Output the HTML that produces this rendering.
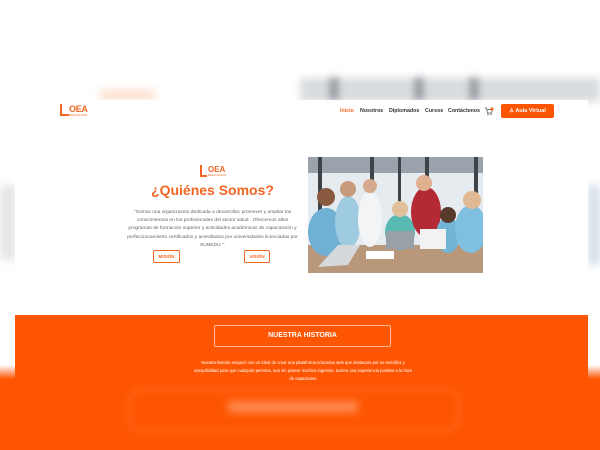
<!DOCTYPE html>
<html><head><meta charset="utf-8"><style>
*{margin:0;padding:0;box-sizing:border-box}
body{width:600px;height:450px;overflow:hidden;background:#fff;position:relative;font-family:"Liberation Sans",sans-serif}
.abs{position:absolute}
.blur{filter:blur(4px)}
nav span{position:absolute;top:108px;font-size:5.3px;font-weight:bold;color:#333}
</style></head><body>
<div class="abs blur" style="left:300px;top:78px;width:300px;height:24px;background:#d9dcdf"></div>
<div class="abs blur" style="left:330px;top:78px;width:8px;height:22px;background:#8c9095"></div>
<div class="abs blur" style="left:415px;top:78px;width:8px;height:22px;background:#8c9095"></div>
<div class="abs blur" style="left:470px;top:78px;width:8px;height:22px;background:#8c9095"></div>
<div class="abs blur" style="left:100px;top:90px;width:55px;height:10px;background:#fde0d0"></div>
<div class="abs blur" style="left:0;top:185px;width:16px;height:75px;background:#e4e6e8"></div>
<div class="abs blur" style="left:588px;top:185px;width:12px;height:80px;background:#d5dfe8"></div>
<div class="abs" style="left:0;top:375px;width:600px;height:75px;background:#fe5502"></div>
<div class="abs" style="left:0;top:365px;width:600px;height:14px;background:linear-gradient(#fff,#fe5502)"></div>
<div class="abs" style="left:128px;top:388px;width:332px;height:44px;border:3px solid rgba(255,255,255,.1);border-radius:12px;filter:blur(3px)"></div>
<div class="abs" style="left:228px;top:401px;width:130px;height:12px;background:rgba(255,255,255,.3);filter:blur(4px)"></div>
<div class="abs" style="left:45px;top:100px;width:543px;height:80px;background:#fff"></div>
<div class="abs" style="left:15px;top:130px;width:573px;height:186px;background:#fff"></div>
<div class="abs" style="left:15px;top:315px;width:573px;height:70px;background:#fe5502"></div>
<div class="abs" style="left:60px;top:104px;width:9px;height:12px;border:2px solid #f26522;border-right:none;border-top:none"></div>
<div class="abs" style="left:69px;top:104px;font-size:9px;font-weight:bold;color:#f26522;letter-spacing:-.3px">OEA</div>
<div class="abs" style="left:69px;top:113px;font-size:3px;color:#f26522">EDUCACIÓN</div>
<nav>
<span style="left:340px;color:#f26522">Inicio</span>
<span style="left:360px">Nosotros</span>
<span style="left:389px">Diplomados</span>
<span style="left:425px">Cursos</span>
<span style="left:448px">Contáctenos</span>
</nav>
<svg class="abs" style="left:484px;top:107px" width="10" height="9" viewBox="0 0 10 9"><path d="M1 1h1.5l1 5h4l1-3.5H3" fill="none" stroke="#555" stroke-width=".7"/><circle cx="4" cy="7.5" r=".7" fill="#555"/><circle cx="7" cy="7.5" r=".7" fill="#555"/><circle cx="8" cy="2" r="1.6" fill="#f26522"/></svg>
<div class="abs" style="left:501px;top:104px;width:53px;height:14px;background:#fe5502;border-radius:2px;color:#fff;font-size:5.5px;font-weight:bold;text-align:center;line-height:14px">♙ Aula Virtual</div>
<div class="abs" style="left:200px;top:165px;width:7px;height:12px;border:2px solid #f26522;border-right:none;border-top:none"></div>
<div class="abs" style="left:208px;top:165px;font-size:8px;font-weight:bold;color:#f26522">OEA</div>
<div class="abs" style="left:208px;top:173px;font-size:3px;color:#f26522">EDUCACIÓN</div>
<div class="abs" style="left:120px;top:182px;width:185px;text-align:center;font-size:14px;font-weight:bold;color:#f26522">¿Quiénes Somos?</div>
<div class="abs" style="left:125px;top:209px;width:175px;text-align:center;font-size:4.9px;line-height:8.2px;color:#666">"Somos una organización dedicada a desarrollar, promover y ampliar los conocimientos en los profesionales del sector salud . Ofrecemos altos programas de formación superior y actividades académicas de capacitación y perfeccionamiento certificados y acreditados por universidades licenciadas por SUNEDU ".</div>
<div class="abs" style="left:153px;top:250px;width:27px;height:13px;border:1px solid #f26522;border-radius:2px;font-size:4.5px;font-weight:bold;color:#f26522;text-align:center;line-height:11px">MISIÓN</div>
<div class="abs" style="left:244px;top:250px;width:26px;height:13px;border:1px solid #f26522;border-radius:2px;font-size:4.5px;font-weight:bold;color:#f26522;text-align:center;line-height:11px">VISIÓN</div>
<svg class="abs" style="left:308px;top:157px" width="175" height="116" viewBox="0 0 175 116">
<rect width="175" height="116" fill="#e6ebef"/>
<rect x="0" y="0" width="175" height="16" fill="#9aa3ab"/>
<g fill="#3e4348"><rect x="10" y="0" width="4" height="80"/><rect x="62" y="0" width="4" height="80"/><rect x="90" y="0" width="3" height="80"/><rect x="117" y="0" width="4" height="80"/><rect x="166" y="0" width="4" height="80"/></g>
<rect x="0" y="88" width="175" height="28" fill="#b8977a"/>
<ellipse cx="18" cy="75" rx="18" ry="24" fill="#6fb0d4"/><circle cx="18" cy="40" r="9" fill="#8a5a40"/>
<ellipse cx="40" cy="65" rx="13" ry="26" fill="#9ecbe0"/><circle cx="40" cy="32" r="8" fill="#c89a7c"/>
<ellipse cx="62" cy="62" rx="12" ry="28" fill="#f3f4f6"/><circle cx="62" cy="29" r="7" fill="#d6aa8c"/>
<ellipse cx="92" cy="75" rx="15" ry="18" fill="#58b9b3"/><circle cx="92" cy="52" r="8" fill="#e2c09b"/>
<ellipse cx="118" cy="55" rx="15" ry="25" fill="#b32a35"/><circle cx="116" cy="26" r="8" fill="#e0b090"/>
<ellipse cx="140" cy="78" rx="12" ry="18" fill="#71b4d6"/><circle cx="140" cy="58" r="8" fill="#5a3a2a"/>
<ellipse cx="163" cy="72" rx="16" ry="24" fill="#7fc0e0"/><circle cx="164" cy="43" r="9" fill="#e0b894"/>
<rect x="78" y="74" width="28" height="18" fill="#9aa0a8"/>
<rect x="112" y="72" width="26" height="20" fill="#f2f2f2"/>
<polygon points="10,110 40,108 52,88 30,88" fill="#d6d9dc"/>
<rect x="58" y="94" width="28" height="8" fill="#fff"/>
</svg>
<div class="abs" style="left:214px;top:325px;width:177px;height:22px;border:1px solid rgba(255,255,255,.6);border-radius:2px;color:#fff;font-size:7px;font-weight:bold;text-align:center;line-height:20px">NUESTRA HISTORIA</div>
<div class="abs" style="left:192px;top:359px;width:222px;text-align:center;font-size:4.2px;line-height:8px;color:#fff">Nuestra historia empezó con un ideal de crear una plataforma educativa web que destacara por su sencillez y asequibilidad para que cualquier persona, aun sin poseer muchos ingresos, tuviera una experiencia positiva a la hora de capacitarse</div>
</body></html>
